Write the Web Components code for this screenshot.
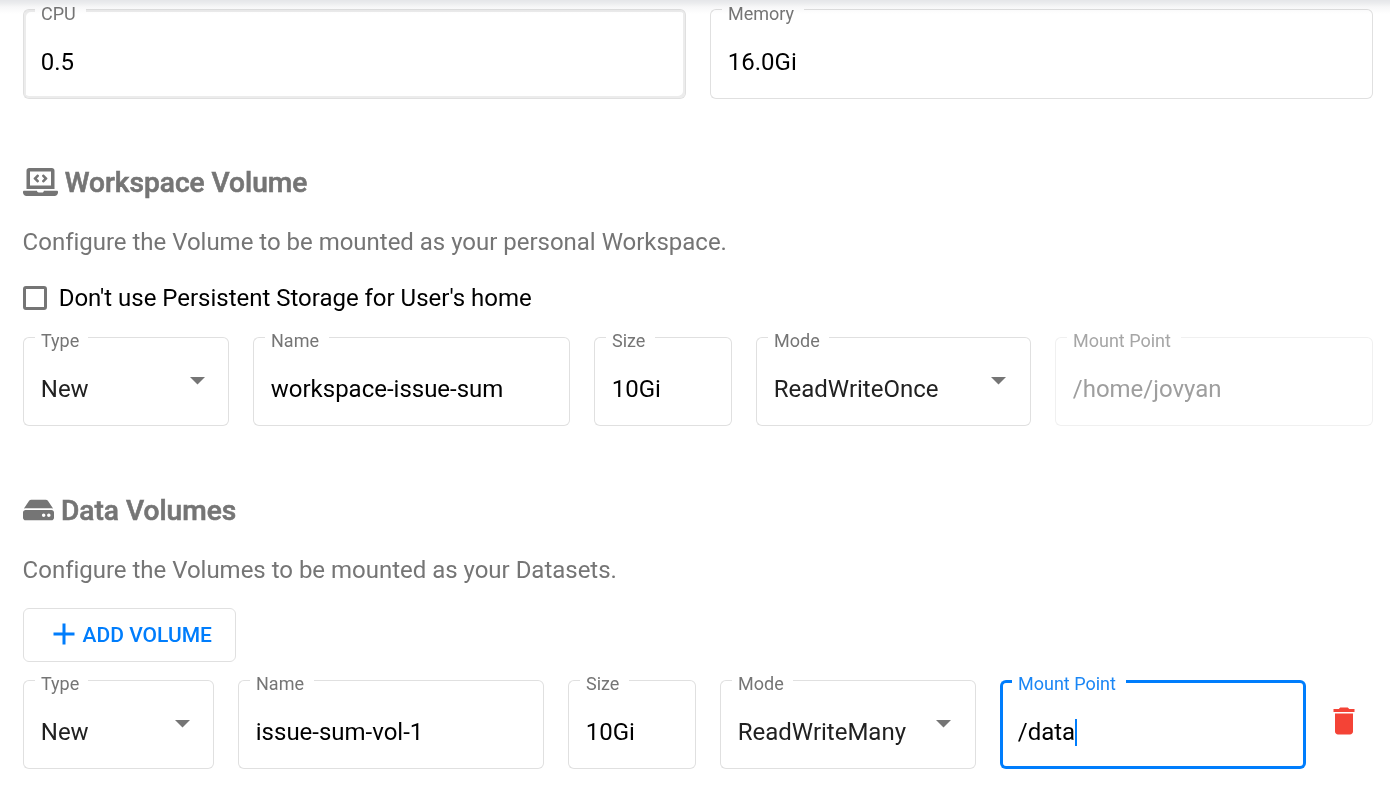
<!DOCTYPE html>
<html lang="en">
<head>
<meta charset="utf-8">
<title>Notebook volumes</title>
<style>
html,body{margin:0;height:100%;background:#fff;overflow:hidden}
body{font-family:Roboto,"Liberation Sans",sans-serif}
</style>
</head>
<body>
<volume-page></volume-page>
<script>
const define = (name, html, setup) => {
  const t = document.createElement('template');
  t.innerHTML = html;
  customElements.define(name, class extends HTMLElement {
    constructor() {
      super();
      this.attachShadow({mode: 'open'}).append(t.content.cloneNode(true));
    }
    connectedCallback() { if (setup) setup(this, this.shadowRoot); }
  });
};

/* Outlined form field with a notched floating label */
define('outline-field', `
<style>
:host{display:flex;position:relative;box-sizing:border-box;height:89px;flex:1 1 0;min-width:0;--line:#e0e0e0;--w:1px;color:#000}
:host([focused]){--line:#007dfc;--w:3px}
:host([tall]){height:90px}
:host([disabled]){--line:#f0f0f0;color:#9e9e9e}
:host([select]){color:#212121}
.outline{position:absolute;inset:0;display:flex}
.outline>*{box-sizing:border-box;border:var(--w) solid var(--line)}
.start{width:12px;border-right:0!important;border-radius:6px 0 0 6px}
.notch{border-left:0!important;border-right:0!important;border-top-color:transparent!important;padding:0 10px 0 6px}
:host([select]) .notch{padding-right:9px}
.end{flex:1;border-left:0!important;border-radius:0 6px 6px 0}
:host([hovered]) .start{box-shadow:inset 2px 2px #ececec,inset 0 -2px #ececec}
:host([hovered]) .notch{box-shadow:inset 0 -2px #ececec}
:host([hovered]) .end{box-shadow:inset -2px -2px #ececec,inset 0 2px #ececec}
.label{display:block;height:20px;line-height:20px;font-size:18px;color:#757575;white-space:nowrap;margin-top:calc(-6px - var(--w))}
:host([tall]) .label{margin-top:-6px}
:host([focused]) .label{color:#1a86f5}
:host([disabled]) .label{color:#a6a6a6}
.value{flex:1;display:flex;align-items:center;padding:15px 0 0 17.8px;font-size:24px;line-height:28px;white-space:nowrap;letter-spacing:-.01px}
:host([tall]) .value{padding-top:16px}
.caret{display:none;width:2px;height:27px;background:#007dfc}
:host([focused]) .caret{display:block}
.arrow{display:none;width:15px;height:7.5px;margin:1px 24px 2px 0;align-self:center}
:host([select]) .arrow{display:block}
:host([label="Mode"]) .arrow{margin-right:25px}
</style>
<div class="value"><slot></slot><span class="caret"></span></div>
<svg class="arrow" viewBox="0 0 10 5"><path d="M0 0h10L5 5z" fill="#757575"/></svg>
<div class="outline"><div class="start"></div><div class="notch"><span class="label"></span></div><div class="end"></div></div>
`, (el, r) => { r.querySelector('.label').textContent = el.getAttribute('label'); });

define('field-row', `
<style>:host{display:flex;gap:24px;align-items:flex-start}</style><slot></slot>`);

define('section-heading', `
<style>
:host{display:flex;align-items:center;height:36px;color:#757575;font-size:28.1px;font-weight:500;white-space:nowrap}
.t{line-height:36px;padding-top:2px;-webkit-text-stroke:.6px #757575}
::slotted(svg){flex:none;display:block;fill:#757575;margin-bottom:1px}
</style><slot name="icon"></slot><span class="t"><slot></slot></span>`);

define('hint-text', `
<style>:host{display:block;color:#757575;font-size:24px;letter-spacing:-.015px;line-height:32px;white-space:nowrap;margin-left:-.4px}</style><slot></slot>`);

define('check-option', `
<style>
:host{display:flex;align-items:center;gap:11.7px;height:32px;color:#000;font-size:24px;letter-spacing:-.015px;white-space:nowrap}
.box{box-sizing:border-box;width:24px;height:24px;border:3px solid #757575;border-radius:3px}
</style><span class="box"></span><span><slot></slot></span>`);

define('add-button', `
<style>
:host{display:flex;align-items:center;box-sizing:border-box;width:213px;height:54px;border:1px solid #e0e0e0;border-radius:6px;padding-left:22.6px;color:#007dfc;font-size:21px;font-weight:500;white-space:nowrap}
svg{width:36px;height:36px;fill:#007dfc;margin:0 .4px 2px -.4px}
</style><svg viewBox="0 0 24 24"><path d="M19 13h-6v6h-2v-6H5v-2h6V5h2v6h6v2z"/></svg><slot></slot>`);

define('delete-button', `
<style>:host{display:block;width:36px;height:36px;flex:none}svg{display:block;fill:#f44336}</style>
<svg width="36" height="36" viewBox="0 0 24 24"><path d="M6 19c0 1.1.9 2 2 2h8c1.1 0 2-.9 2-2V7H6v12zM19 4h-3.5l-1-1h-5l-1 1H5v2h14V4z"/></svg>`);

define('volume-page', `
<style>
:host{display:block;position:relative;box-sizing:border-box;width:1390px;height:801px;padding:9px 17px 0 23px}
.shade{position:absolute;left:0;right:0;top:0;height:14px;background:linear-gradient(#e5e6e9 0,#ebecee 3px,#f7f7f8 7px,#fff 14px);mix-blend-mode:multiply}
.resources{height:90px}
.workspace{margin-top:65px}
.data{margin-top:66px}
.workspace hint-text,.data hint-text{margin-top:26px}
check-option{margin-top:24px}
.workspace field-row{margin-top:23px}
add-button{margin-top:22px}
.data field-row{margin-top:18px}
delete-button{margin:23px 0 0 -4px}
</style>
<field-row class="resources"><outline-field label="CPU" tall hovered>0.5</outline-field><outline-field label="Memory" tall>16.0Gi</outline-field></field-row>
<section class="workspace">
<section-heading><svg slot="icon" width="35" height="28" viewBox="0 0 640 512" style="margin-right:6.7px"><path d="M255.03 261.65c6.25 6.25 16.38 6.25 22.63 0l11.31-11.31c6.25-6.25 6.25-16.38 0-22.63L253.25 192l35.71-35.72c6.25-6.25 6.25-16.38 0-22.63l-11.31-11.31c-6.25-6.25-16.38-6.25-22.63 0l-58.34 58.34c-6.25 6.25-6.25 16.38 0 22.63l58.35 58.34zm96.01-11.3l11.31 11.31c6.25 6.25 16.38 6.25 22.63 0l58.34-58.34c6.25-6.25 6.25-16.38 0-22.63l-58.34-58.34c-6.25-6.25-16.38-6.25-22.63 0l-11.31 11.31c-6.25 6.25-6.25 16.38 0 22.63L386.75 192l-35.71 35.72c-6.25 6.25-6.25 16.38 0 22.63zM624 416H381.54c-.74 19.81-14.71 32-32.74 32H288c-18.69 0-33.02-17.47-32.77-32H16c-8.8 0-16 7.2-16 16v16c0 35.2 28.8 64 64 64h512c35.2 0 64-28.8 64-64v-16c0-8.8-7.2-16-16-16zM576 48c0-26.4-21.6-48-48-48H112C85.6 0 64 21.6 64 48v336h512V48zm-64 272H128V64h384v256z"/></svg>Workspace Volume</section-heading>
<hint-text>Configure the Volume to be mounted as your personal Workspace.</hint-text>
<check-option>Don't use Persistent Storage for User's home</check-option>
<field-row>
<outline-field label="Type" select style="flex:0 0 206px">New</outline-field>
<outline-field label="Name" style="flex:0 0 317px">workspace-issue-sum</outline-field>
<outline-field label="Size" style="flex:0 0 138px">10Gi</outline-field>
<outline-field label="Mode" select style="flex:0 0 275px">ReadWriteOnce</outline-field>
<outline-field label="Mount Point" disabled>/home/jovyan</outline-field>
</field-row>
</section>
<section class="data">
<section-heading><svg slot="icon" width="31" height="28" viewBox="0 0 576 512" style="margin-right:7px"><path d="M576 304v96c0 26.51-21.49 48-48 48H48c-26.51 0-48-21.49-48-48v-96c0-26.51 21.49-48 48-48h480c26.51 0 48 21.49 48 48zm-48-80a79.557 79.557 0 0 1 30.777 6.165L462.25 85.374A48.003 48.003 0 0 0 422.311 64H153.689a48 48 0 0 0-39.938 21.374L17.223 230.165A79.557 79.557 0 0 1 48 224h480zm-48 96c-17.673 0-32 14.327-32 32s14.327 32 32 32 32-14.327 32-32-14.327-32-32-32zm-96 0c-17.673 0-32 14.327-32 32s14.327 32 32 32 32-14.327 32-32-14.327-32-32-32z"/></svg>Data Volumes</section-heading>
<hint-text>Configure the Volumes to be mounted as your Datasets.</hint-text>
<add-button>ADD VOLUME</add-button>
<field-row>
<outline-field label="Type" select style="flex:0 0 191px">New</outline-field>
<outline-field label="Name" style="flex:0 0 306px">issue-sum-vol-1</outline-field>
<outline-field label="Size" style="flex:0 0 128px">10Gi</outline-field>
<outline-field label="Mode" select style="flex:0 0 256px">ReadWriteMany</outline-field>
<outline-field label="Mount Point" focused style="flex:0 0 306px">/data</outline-field>
<delete-button></delete-button>
</field-row>
</section>
<div class="shade"></div>
`);
</script>
</body>
</html>
